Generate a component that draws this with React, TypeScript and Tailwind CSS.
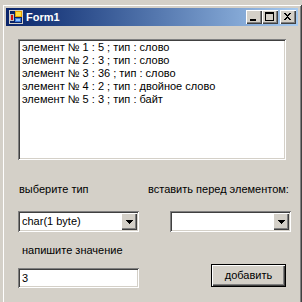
import React from 'react';

const items = [
  "элемент № 1 : 5 ; тип : слово",
  "элемент № 2 : 3 ; тип : слово",
  "элемент № 3 : 36 ; тип : слово",
  "элемент № 4 : 2 ; тип : двойное слово",
  "элемент № 5 : 3 ; тип : байт",
];

function FormIcon() {
  return (
    <svg width="16" height="16" viewBox="0 0 16 16" shapeRendering="crispEdges">
      <rect x="1" y="1" width="14" height="14" fill="#d4d0c8" />
      <rect x="2" y="2" width="12" height="12" fill="#0a246a" />
      <rect x="2" y="5" width="4" height="7" fill="#c0c0c0" />
      <rect x="3" y="6" width="2" height="5" fill="#d01010" />
      <rect x="7" y="2" width="7" height="6" fill="#e8a000" />
      <rect x="8" y="3" width="5" height="4" fill="#ffe040" />
      <rect x="7" y="9" width="6" height="4" fill="#3a78d8" />
      <rect x="8" y="10" width="4" height="2" fill="#8cc0ff" />
    </svg>
  );
}

function CaptionButton({ kind }: { kind: 'min' | 'max' | 'close' }) {
  return (
    <div className="w-[16px] h-[14px] bg-[#d4d0c8] flex items-center justify-center shadow-[inset_1px_1px_0_#fff,inset_-1px_-1px_0_#404040,inset_-2px_-2px_0_#808080]">
      <svg width="16" height="14" viewBox="0 0 16 14" shapeRendering="crispEdges">
        {kind === 'min' && <rect x="4" y="9" width="6" height="2" fill="#000" />}
        {kind === 'max' && (
          <>
            <rect x="3" y="2" width="9" height="2" fill="#000" />
            <rect x="3" y="2" width="1" height="9" fill="#000" />
            <rect x="11" y="2" width="1" height="9" fill="#000" />
            <rect x="3" y="10" width="9" height="1" fill="#000" />
          </>
        )}
        {kind === 'close' && (
          <path d="M4 3h2v1h1v1h1v-1h1v-1h2v1h-1v1h-1v1h-1v1h1v1h1v1h1v1h-2v-1h-1v-1h-1v1h-1v1h-2v-1h1v-1h1v-1h1v-1h-1v-1h-1v-1h-1z" fill="#000" />
        )}
      </svg>
    </div>
  );
}

function Combo({ value }: { value?: string }) {
  return (
    <div className="w-[121px] h-[21px] bg-white flex items-center p-[2px] shadow-[inset_1px_1px_0_#808080,inset_-1px_-1px_0_#fff,inset_2px_2px_0_#404040,inset_-2px_-2px_0_#d4d0c8]">
      <span className="flex-1 pl-[2px] leading-[17px] truncate">{value}</span>
      <div className="w-[16px] h-[17px] bg-[#d4d0c8] flex items-center justify-center shadow-[inset_1px_1px_0_#fff,inset_-1px_-1px_0_#404040,inset_-2px_-2px_0_#808080]">
        <svg width="7" height="4" viewBox="0 0 7 4" shapeRendering="crispEdges">
          <path d="M0 0h7v1h-1v1h-1v1h-1v1h-1v-1h-1v-1h-1v-1h-1z" fill="#000" />
        </svg>
      </div>
    </div>
  );
}

export default function App() {
  return (
    <div className="w-[302px] h-[302px] overflow-hidden bg-[#d4d0c8] pl-[2px] pt-[4px] font-['Liberation_Sans',Arial,sans-serif] text-[11px] text-black">
      <div className="w-[300px] h-[320px] bg-[#d4d0c8] p-[4px] shadow-[inset_1px_1px_0_#d4d0c8,inset_-1px_-1px_0_#404040,inset_2px_2px_0_#fff,inset_-2px_-2px_0_#808080]">
        {/* title bar */}
        <div className="h-[18px] flex items-center pl-[2px] pr-[2px] bg-gradient-to-r from-[#0a246a] to-[#a6caf0]">
          <FormIcon />
          <span className="ml-[2px] text-white font-bold text-[11px] leading-none">Form1</span>
          <div className="ml-auto flex items-center">
            <CaptionButton kind="min" />
            <CaptionButton kind="max" />
            <div className="w-[2px]" />
            <CaptionButton kind="close" />
          </div>
        </div>

        {/* list box */}
        <div className="ml-[12px] mt-[13px] w-[268px] h-[121px] bg-white pt-[2px] pl-[4px] shadow-[inset_1px_1px_0_#808080,inset_-1px_-1px_0_#fff,inset_2px_2px_0_#404040,inset_-2px_-2px_0_#d4d0c8]">
          {items.map((t, i) => (
            <div key={i} className="leading-[13px] whitespace-nowrap">{t}</div>
          ))}
        </div>

        <div className="flex mt-[23px] leading-[13px]">
          <span className="ml-[13px] w-[129px]">выберите тип</span>
          <span>вставить перед элементом:</span>
        </div>

        <div className="flex mt-[15px]">
          <div className="ml-[12px]"><Combo value="char(1 byte)" /></div>
          <div className="ml-[31px]"><Combo /></div>
        </div>

        <div className="mt-[12px] ml-[16px] leading-[13px]">напишите значение</div>

        <div className="flex items-start mt-[7px]">
          <div className="ml-[12px] mt-[4px] w-[121px] h-[20px] bg-white pl-[4px] leading-[20px] shadow-[inset_1px_1px_0_#808080,inset_-1px_-1px_0_#fff,inset_2px_2px_0_#404040,inset_-2px_-2px_0_#d4d0c8]">
            3
          </div>
          <button className="ml-[72px] w-[75px] h-[23px] bg-[#d4d0c8] border border-black leading-none shadow-[inset_1px_1px_0_#fff,inset_-1px_-1px_0_#404040,inset_-2px_-2px_0_#808080]">
            добавить
          </button>
        </div>
      </div>
    </div>
  );
}
